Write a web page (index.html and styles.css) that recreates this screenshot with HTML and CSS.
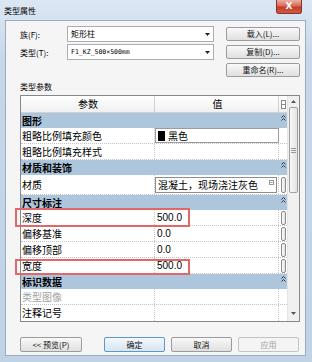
FILE: index.html
```html
<!DOCTYPE html>
<html lang="zh-CN">
<head>
    <meta charset="UTF-8">
    <title>类型属性</title>
    <link rel="stylesheet" href="styles.css">
</head>
<body>
<div class="window">
    <div class="titlebar">
        <span class="title">类型属性</span>
        <div class="close">X</div>
    </div>

    <div class="client">
        <!-- family / type pickers -->
        <div class="top-form">
            <span class="label">族(F):</span>
            <div class="select">矩形柱<svg width="5" height="3" viewBox="0 0 5 3"><path d="M0 0h5L2.5 3z" fill="#222"/></svg></div>
            <div class="btn">载入(L)...</div>

            <span class="label">类型(T):</span>
            <div class="select small">F1_KZ_500×500mm<svg width="5" height="3" viewBox="0 0 5 3"><path d="M0 0h5L2.5 3z" fill="#222"/></svg></div>
            <div class="btn">复制(D)...</div>

            <span></span>
            <span></span>
            <div class="btn">重命名(R)...</div>
        </div>

        <div class="section-label">类型参数</div>

        <div class="grid-wrap">
            <div class="grid-box">
                <div class="grid">
                    <div class="row head">
                        <div class="c1">参数</div>
                        <div class="c2">值</div>
                        <div class="c3"><svg width="5" height="9" viewBox="0 0 5 9"><rect x="0.5" y="0.5" width="4" height="8" fill="#fff" stroke="#8a8a8a"/><path d="M0.5 4.5h4" stroke="#8a8a8a"/></svg></div>
                    </div>

                    <div class="row group">
                        <div class="gname">图形</div>
                        <div class="c3"><svg width="5" height="6" viewBox="0 0 5 6"><path d="M0.5 2.5L2.5 0.5L4.5 2.5M0.5 5.5L2.5 3.5L4.5 5.5" stroke="#333" fill="none"/></svg></div>
                    </div>
                    <div class="row">
                        <div class="c1">粗略比例填充颜色</div>
                        <div class="c2 boxed"><span class="swatch"></span>黑色</div>
                        <div class="c3"></div>
                    </div>
                    <div class="row">
                        <div class="c1">粗略比例填充样式</div>
                        <div class="c2"></div>
                        <div class="c3"></div>
                    </div>

                    <div class="row group">
                        <div class="gname">材质和装饰</div>
                        <div class="c3"><svg width="5" height="6" viewBox="0 0 5 6"><path d="M0.5 2.5L2.5 0.5L4.5 2.5M0.5 5.5L2.5 3.5L4.5 5.5" stroke="#333" fill="none"/></svg></div>
                    </div>
                    <div class="row tall">
                        <div class="c1">材质</div>
                        <div class="c2">
                            <div class="field">混凝土，现场浇注灰色<svg width="5" height="5" viewBox="0 0 5 5"><rect x="0.5" y="0.5" width="4" height="4" fill="#fff" stroke="#999"/><path d="M1.5 2.5h2" stroke="#999"/></svg></div>
                        </div>
                        <div class="c3"><span class="knob"></span></div>
                    </div>

                    <div class="row group">
                        <div class="gname">尺寸标注</div>
                        <div class="c3"><svg width="5" height="6" viewBox="0 0 5 6"><path d="M0.5 2.5L2.5 0.5L4.5 2.5M0.5 5.5L2.5 3.5L4.5 5.5" stroke="#333" fill="none"/></svg></div>
                    </div>
                    <div class="row">
                        <div class="c1">深度</div>
                        <div class="c2 num">500.0</div>
                        <div class="c3"><span class="knob"></span></div>
                    </div>
                    <div class="row">
                        <div class="c1">偏移基准</div>
                        <div class="c2 num">0.0</div>
                        <div class="c3"><span class="knob"></span></div>
                    </div>
                    <div class="row">
                        <div class="c1">偏移顶部</div>
                        <div class="c2 num">0.0</div>
                        <div class="c3"><span class="knob"></span></div>
                    </div>
                    <div class="row">
                        <div class="c1">宽度</div>
                        <div class="c2 num">500.0</div>
                        <div class="c3"><span class="knob"></span></div>
                    </div>

                    <div class="row group">
                        <div class="gname">标识数据</div>
                        <div class="c3"><svg width="5" height="6" viewBox="0 0 5 6"><path d="M0.5 2.5L2.5 0.5L4.5 2.5M0.5 5.5L2.5 3.5L4.5 5.5" stroke="#333" fill="none"/></svg></div>
                    </div>
                    <div class="row">
                        <div class="c1 muted">类型图像</div>
                        <div class="c2"></div>
                        <div class="c3"></div>
                    </div>
                    <div class="row last">
                        <div class="c1">注释记号</div>
                        <div class="c2"></div>
                        <div class="c3"></div>
                    </div>
                </div>

                <!-- vertical scrollbar -->
                <div class="scrollbar">
                    <svg class="arrow-up" width="5" height="3" viewBox="0 0 5 3"><path d="M0 3h5L2.5 0z" fill="#555"/></svg>
                    <div class="thumb"><span></span><span></span><span></span></div>
                    <svg class="arrow-down" width="5" height="3" viewBox="0 0 5 3"><path d="M0 0h5L2.5 3z" fill="#555"/></svg>
                </div>
            </div>

            <!-- red annotation boxes -->
            <div class="mark mark-depth"></div>
            <div class="mark mark-width"></div>
        </div>

        <div class="footer">
            <div class="btn preview">&lt;&lt; 预览(P)</div>
            <div class="btn default">确定</div>
            <div class="btn">取消</div>
            <div class="btn disabled">应用</div>
        </div>
    </div>
</div>
</body>
</html>
```

FILE: styles.css
```css
* {
    box-sizing: border-box;
}

body {
    margin: 0;
    width: 312px;
    height: 362px;
    overflow: hidden;
    font-family: "Noto Sans CJK SC", "Liberation Sans", sans-serif;
    color: #000;
    background: #c6d7e9;
}

.window {
    height: 362px;
    display: flex;
    flex-direction: column;
    padding: 0 6px 6px 5px;
    background: linear-gradient(#dce7f3, #c6d7e9 60px, #bfd2e6);
}

.titlebar {
    height: 20px;
    display: flex;
    justify-content: space-between;
    align-items: flex-start;
}

.title {
    font-size: 8px;
    line-height: 10px;
    margin: 6px 0 0 -1px;
}

.close {
    width: 26px;
    height: 14px;
    margin-right: 4px;
    background: linear-gradient(#eab0a2, #d76a57 45%, #c23d2c 55%, #d25a45);
    border: 1px solid #8a3024;
    border-top: 0;
    border-radius: 0 0 3px 3px;
    color: #fff;
    font: bold 9px/13px "DejaVu Sans", sans-serif;
    text-align: center;
}

.client {
    flex: 1;
    background: #f5f5f5;
    border: 1px solid #9aacbf;
    padding: 4px 5px 0 14px;
}

/* top pickers */
.top-form {
    display: grid;
    grid-template-columns: 47px 159px 74px;
    grid-auto-rows: 18px;
    align-items: center;
}

.label {
    font-size: 8px;
}

.select {
    width: 147px;
    height: 16px;
    background: #fff;
    border: 1px solid #abadb3;
    font-size: 8px;
    line-height: 14px;
    padding: 0 3px 0 3px;
    display: flex;
    justify-content: space-between;
    align-items: center;
}

.select.small {
    font-size: 6.5px;
    font-family: "DejaVu Sans Mono", "Noto Sans CJK SC", monospace;
}

.btn {
    height: 14px;
    font-size: 8px;
    line-height: 12px;
    text-align: center;
    border: 1px solid #9c9c9c;
    border-radius: 2px;
    background: linear-gradient(#f9f9f9, #ececec 50%, #e0e0e0);
    color: #111;
}

.section-label {
    font-size: 8px;
    line-height: 12px;
    margin: 2px 0;
}

/* property grid */
.grid-wrap {
    position: relative;
    width: 280px;
}

.grid-box {
    display: flex;
    height: 227px;
    border: 1px solid #828790;
    background: #fff;
}

.grid {
    width: 266px;
}

.row {
    display: flex;
    height: 16px;
    font-size: 10px;
    line-height: 15px;
    border-bottom: 1px dotted #c4c4c4;
}

.row.tall {
    height: 20px;
    line-height: 19px;
}

.row.last {
    border-bottom: 0;
}

.c1 {
    width: 134px;
    padding-left: 1px;
    border-right: 1px dotted #c4c4c4;
    white-space: nowrap;
}

.c2 {
    width: 124px;
    padding-left: 2px;
    border-right: 1px dotted #c4c4c4;
    white-space: nowrap;
}

.c3 {
    width: 8px;
    display: flex;
    justify-content: center;
    align-items: center;
}

.muted {
    color: #a3a3a3;
}

.num {
    font-family: "Liberation Sans", sans-serif;
}

.row.head {
    height: 17px;
    line-height: 16px;
    background: linear-gradient(#ffffff, #f0f0f0);
    border-bottom: 1px solid #d2d2d2;
}

.row.head .c1,
.row.head .c2 {
    text-align: center;
    border-right: 1px solid #d2d2d2;
}

.row.group {
    height: 15px;
    line-height: 15px;
    background: #adc6dc;
    border-bottom: 0;
    font-weight: bold;
}

.gname {
    width: 258px;
    padding-left: 1px;
}

.row.group .c3 {
    align-items: flex-start;
    padding-top: 2px;
}

.c2.boxed {
    border: 1px solid #9c9c9c;
    display: flex;
    align-items: center;
    line-height: 14px;
}

.swatch {
    display: inline-block;
    width: 7px;
    height: 10px;
    background: #000;
    margin-right: 3px;
}

.row.tall .c2 {
    padding: 2px 1px 2px 0;
}

.field {
    height: 16px;
    border: 1px solid #8e8e8e;
    padding: 0 2px 0 2px;
    line-height: 14px;
    display: flex;
    justify-content: space-between;
    align-items: flex-start;
}

.field svg {
    margin-top: 2px;
}

.knob {
    display: block;
    width: 5px;
    height: 14px;
    margin-left: 1px;
    border: 1px solid #8c8c8c;
    border-radius: 2px;
    background: linear-gradient(90deg, #fafafa, #e2e2e2);
}

.row.tall .knob {
    height: 16px;
}

/* scrollbar */
.scrollbar {
    width: 12px;
    background: #f0f0f0;
    border-left: 1px solid #e4e4e4;
    display: flex;
    flex-direction: column;
    align-items: center;
}

.arrow-up {
    margin-top: 4px;
}

.thumb {
    width: 9px;
    height: 86px;
    margin-top: 4px;
    border: 1px solid #a0a0a0;
    border-radius: 2px;
    background: linear-gradient(90deg, #f7f7f7, #e3e3e3);
    display: flex;
    flex-direction: column;
    justify-content: center;
    align-items: center;
    gap: 1px;
}

.thumb span {
    display: block;
    width: 5px;
    height: 1px;
    background: #9a9a9a;
}

.arrow-down {
    margin-top: auto;
    margin-bottom: 6px;
}

/* red annotation boxes */
.mark {
    position: absolute;
    left: -5px;
    width: 175px;
    border: 2px solid #e26767;
}

.mark-depth {
    top: 113px;
    height: 19px;
}

.mark-width {
    top: 164px;
    height: 16px;
}

/* dialog buttons */
.footer {
    display: flex;
    gap: 6px;
    margin-top: 15px;
}

.footer .btn {
    width: 61px;
    height: 15px;
    line-height: 13px;
}

.footer .preview {
    width: 62px;
    margin-right: 16px;
}

.footer .default {
    border-color: #5f97c8;
    background: linear-gradient(#f3f8fc, #e4eef7 50%, #d8e6f2);
}

.footer .disabled {
    color: #a0a0a0;
    border-color: #c3c3c3;
    background: #f4f4f4;
}
```
